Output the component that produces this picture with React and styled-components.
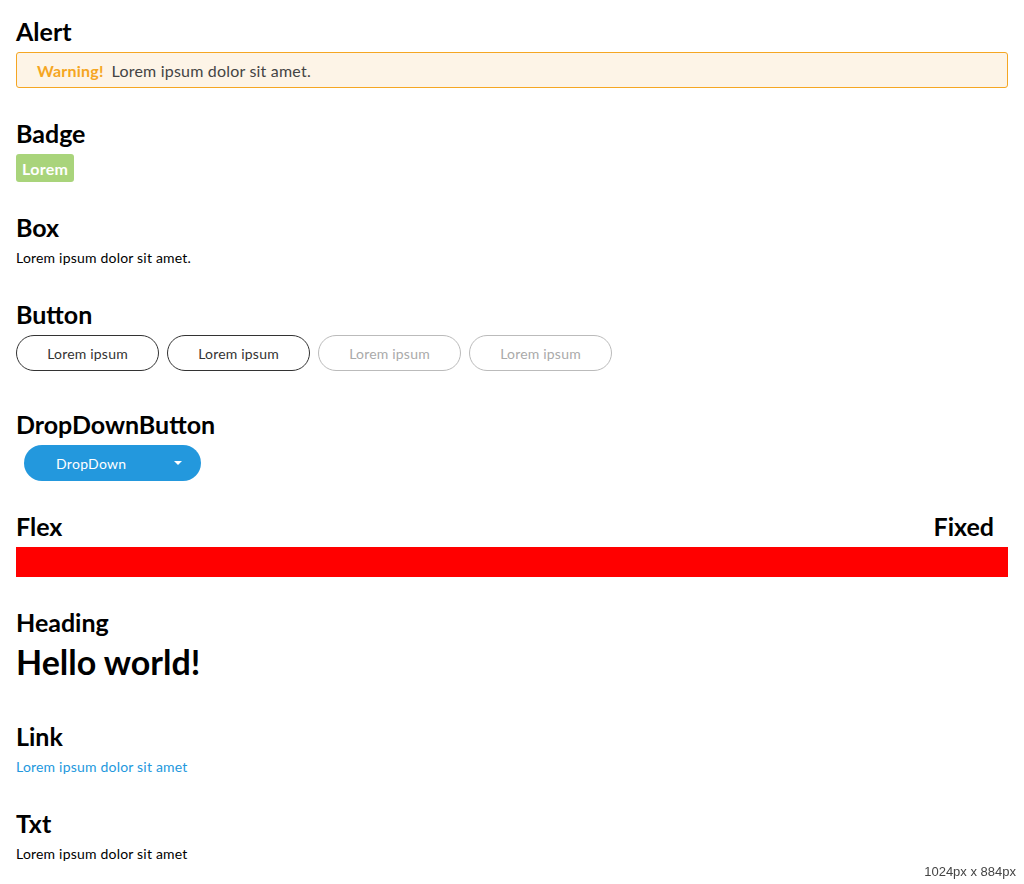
import React from "react"
import styled, { createGlobalStyle } from "styled-components"

const Global = createGlobalStyle`
  html, body {
    margin: 0;
    padding: 0;
    background: #ffffff;
  }
  body {
    font-family: Lato, "Open Sans", sans-serif;
    color: #000000;
  }
`

let Page = styled.div`
  display: flex;
  flex-direction: column;
  padding: 16px 16px 0 16px;
`

let Section = styled.section`
  display: flex;
  flex-direction: column;
  gap: 6px;
  margin-bottom: ${(p) => p.$after || 30}px;
`

let Title = styled.h2`
  margin: 0;
  font-size: 25px;
  line-height: 30px;
  font-weight: 700;
  color: #000000;
`

let TitleRow = styled.div`
  display: flex;
  justify-content: space-between;
  padding-right: 14px;
`

let Alert = styled.div`
  display: flex;
  align-items: center;
  gap: 8px;
  height: 36px;
  box-sizing: border-box;
  padding: 0 20px;
  border: 1px solid #f5a623;
  border-radius: 3px;
  background: #fdf4e7;
  font-size: 16px;
  letter-spacing: 0.2px;
  color: #444444;
`

let AlertLabel = styled.span`
  color: #f5a623;
  font-weight: 700;
`

let Badge = styled.span`
  align-self: flex-start;
  display: inline-flex;
  align-items: center;
  height: 28px;
  padding: 0 6px;
  border-radius: 3px;
  background: #a9d47b;
  color: #ffffff;
  font-size: 16px;
  font-weight: 700;
  letter-spacing: 0.3px;
`

let Text = styled.p`
  margin: 0;
  font-size: 14px;
  line-height: 20px;
  letter-spacing: 0.2px;
  color: ${(p) => p.$color || "#000000"};
`

let Link = styled.a`
  font-size: 14px;
  line-height: 20px;
  letter-spacing: 0.2px;
  color: #2398dd;
  text-decoration: none;
`

let ButtonRow = styled.div`
  display: flex;
  gap: 8px;
`

let Button = styled.button`
  width: 143px;
  height: 36px;
  border-radius: 18px;
  border: 1px solid ${(p) => (p.disabled ? "#bbbbbb" : "#333333")};
  background: #ffffff;
  color: ${(p) => (p.disabled ? "#aaaaaa" : "#333333")};
  font-family: inherit;
  font-size: 14px;
  letter-spacing: 0.2px;
  padding: 0;
`

let DropDown = styled.button`
  align-self: flex-start;
  margin-left: 8px;
  display: flex;
  align-items: center;
  justify-content: space-between;
  width: 177px;
  height: 36px;
  box-sizing: border-box;
  padding: 0 19px 0 32px;
  border: none;
  border-radius: 18px;
  background: #2398dd;
  color: #ffffff;
  font-family: inherit;
  font-size: 14px;
  letter-spacing: 0.3px;
`

let Caret = styled.span`
  width: 0;
  height: 0;
  border-left: 4px solid transparent;
  border-right: 4px solid transparent;
  border-top: 4px solid #ffffff;
`

let Bar = styled.div`
  height: 30px;
  background: #ff0000;
`

let Big = styled.h1`
  margin: 0;
  font-size: 34px;
  line-height: 38px;
  font-weight: 700;
`

let SizeTag = styled.div`
  position: fixed;
  right: 8px;
  bottom: 5px;
  font-family: "Liberation Sans", Arial, sans-serif;
  font-size: 13px;
  color: #444444;
`

export default function App() {
  return (
    <>
      <Global />
      <Page>
        <Section>
          <Title>Alert</Title>
          <Alert>
            <AlertLabel>Warning!</AlertLabel>
            <span>Lorem ipsum dolor sit amet.</span>
          </Alert>
        </Section>
        <Section>
          <Title>Badge</Title>
          <Badge>Lorem</Badge>
        </Section>
        <Section $after={31}>
          <Title>Box</Title>
          <Text>Lorem ipsum dolor sit amet.</Text>
        </Section>
        <Section $after={38}>
          <Title>Button</Title>
          <ButtonRow>
            <Button>Lorem ipsum</Button>
            <Button>Lorem ipsum</Button>
            <Button disabled>Lorem ipsum</Button>
            <Button disabled>Lorem ipsum</Button>
          </ButtonRow>
        </Section>
        <Section>
          <Title>DropDownButton</Title>
          <DropDown>
            <span>DropDown</span>
            <Caret />
          </DropDown>
        </Section>
        <Section>
          <TitleRow>
            <Title>Flex</Title>
            <Title>Fixed</Title>
          </TitleRow>
          <Bar />
        </Section>
        <Section $after={40}>
          <Title>Heading</Title>
          <Big>Hello world!</Big>
        </Section>
        <Section $after={31}>
          <Title>Link</Title>
          <Link href="#">Lorem ipsum dolor sit amet</Link>
        </Section>
        <Section>
          <Title>Txt</Title>
          <Text>Lorem ipsum dolor sit amet</Text>
        </Section>
      </Page>
      <SizeTag>1024px x 884px</SizeTag>
    </>
  )
}
